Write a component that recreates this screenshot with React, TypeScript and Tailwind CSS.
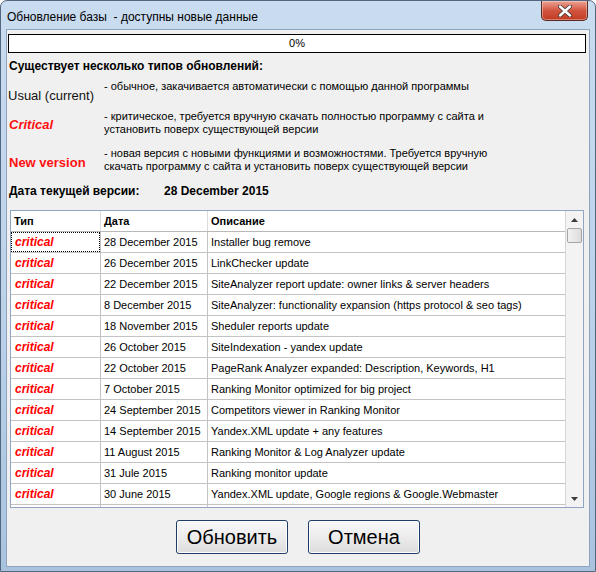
import React from 'react'

type Row = { date: string; desc: string }

const rows: Row[] = [
	{ date: '28 December 2015', desc: 'Installer bug remove' },
	{ date: '26 December 2015', desc: 'LinkChecker update' },
	{ date: '22 December 2015', desc: 'SiteAnalyzer report update: owner links & server headers' },
	{ date: '8 December 2015', desc: 'SiteAnalyzer: functionality expansion (https protocol & seo tags)' },
	{ date: '18 November 2015', desc: 'Sheduler reports update' },
	{ date: '26 October 2015', desc: 'SiteIndexation - yandex update' },
	{ date: '22 October 2015', desc: 'PageRank Analyzer expanded: Description, Keywords, H1' },
	{ date: '7 October 2015', desc: 'Ranking Monitor optimized for big project' },
	{ date: '24 September 2015', desc: 'Competitors viewer in Ranking Monitor' },
	{ date: '14 September 2015', desc: 'Yandex.XML update + any features' },
	{ date: '11 August 2015', desc: 'Ranking Monitor & Log Analyzer update' },
	{ date: '31 Jule 2015', desc: 'Ranking monitor update' },
	{ date: '30 June 2015', desc: 'Yandex.XML update, Google regions & Google.Webmaster' },
]

function CloseButton() {
	return (
		<div className="absolute right-[7px] top-0 flex h-[20px] w-[47px] items-center justify-center rounded-b-[5px] border border-t-0 border-[#5b2a22] bg-gradient-to-b from-[#e9a294] via-[#d2553f] to-[#c23a22] shadow-[inset_0_0_0_1px_rgba(255,255,255,0.35)]">
			<svg width="14" height="12" viewBox="0 0 14 12">
				<path
					d="M2 1.5 L12 10.5 M12 1.5 L2 10.5"
					stroke="#4a3a3a"
					strokeWidth="4.2"
					strokeLinecap="round"
				/>
				<path
					d="M2 1.5 L12 10.5 M12 1.5 L2 10.5"
					stroke="#ffffff"
					strokeWidth="2.4"
					strokeLinecap="round"
				/>
			</svg>
		</div>
	)
}

function Scrollbar() {
	return (
		<div className="flex w-[18px] flex-col border-l border-[#d6d6d6] bg-[#f3f3f3]">
			<div className="flex h-[17px] items-center justify-center">
				<svg width="7" height="4" viewBox="0 0 7 4">
					<path d="M3.5 0 L7 4 L0 4 Z" fill="#3c3c3c" />
				</svg>
			</div>
			<div className="mx-[1px] h-[15px] rounded-[2px] border border-[#a5a5a5] bg-gradient-to-r from-[#f2f2f2] to-[#dcdcdc]" />
			<div className="flex-1" />
			<div className="flex h-[17px] items-center justify-center">
				<svg width="7" height="4" viewBox="0 0 7 4">
					<path d="M0 0 L7 0 L3.5 4 Z" fill="#3c3c3c" />
				</svg>
			</div>
		</div>
	)
}

function UpdatesTable() {
	return (
		<div className="ml-[3px] flex h-[298px] w-[574px] border border-[#8fa5c2] bg-white">
			<div className="flex flex-1 flex-col overflow-hidden">
				<div className="flex h-[21px] shrink-0 border-b border-[#b9b9b9] text-[11px] font-bold leading-[20px] text-black">
					<div className="w-[90px] shrink-0 border-r border-[#dcdcdc] pl-[3px]">Тип</div>
					<div className="w-[107px] shrink-0 border-r border-[#dcdcdc] pl-[3px]">Дата</div>
					<div className="flex-1 pl-[3px]">Описание</div>
				</div>
				{rows.map((row, i) => (
					<div
						className="flex h-[21px] shrink-0 border-b border-[#c3c3c3] text-[11px] leading-[20px]"
						key={row.date + i}
					>
						<div className="relative w-[90px] shrink-0 border-r border-[#c3c3c3] pl-[4px] text-[12px] font-bold italic text-[#ff0000]">
							critical
							{i === 0 && (
								<div className="absolute inset-0 border border-dotted border-black" />
							)}
						</div>
						<div className="w-[107px] shrink-0 border-r border-[#c3c3c3] pl-[3px] text-black">
							{row.date}
						</div>
						<div className="flex-1 whitespace-nowrap pl-[3px] text-black">{row.desc}</div>
					</div>
				))}
				{/* next row, scrolled almost out of view */}
				<div className="flex h-[21px] shrink-0">
					<div className="w-[90px] shrink-0 border-r border-[#c3c3c3]" />
					<div className="w-[107px] shrink-0 border-r border-[#c3c3c3]" />
					<div className="flex-1" />
				</div>
			</div>
			<Scrollbar />
		</div>
	)
}

export default function App() {
	return (
		<div
			className="relative flex h-[572px] w-[596px] flex-col overflow-hidden rounded-t-[7px] border border-[#52677f] bg-gradient-to-b from-[#c9dcf0] via-[#bdd3ea] to-[#a9c3df]"
			style={{ fontFamily: '"Liberation Sans", Arial, sans-serif' }}
		>
			<div className="flex h-[28px] shrink-0 items-center pl-[6px] pt-[3px] text-[12px] text-black">
				Обновление базы&nbsp; - доступны новые данные
			</div>
			<CloseButton />

			<div className="mx-[5px] mb-[4px] flex flex-1 flex-col border border-[#8ea3bf] bg-[#f0f0f0]">
				<div className="ml-[1px] mr-[3px] mt-[4px] flex h-[19px] items-center justify-center border border-black bg-white text-[11px] text-black">
					0%
				</div>

				<div className="ml-[2px] mt-[6px] h-[14px] text-[12px] font-bold leading-[14px] text-black">
					Существует несколько типов обновлений:
				</div>

				<div className="mt-[7px] flex h-[30px] text-black">
					<div className="w-[97px] shrink-0 pl-[1px] pt-[8px] text-[13px] leading-[15px] text-[#111111]">
						Usual (current)
					</div>
					<div className="text-[11px] leading-[13px]">
						- обычное, закачивается автоматически с помощью данной программы
					</div>
				</div>

				<div className="flex h-[37px] text-black">
					<div className="w-[97px] shrink-0 pl-[2px] pt-[7px] text-[13px] font-bold italic leading-[15px] text-[#ff1010]">
						Critical
					</div>
					<div className="text-[11px] leading-[13px]">
						- критическое, требуется вручную скачать полностью программу с сайта и
						<br />
						установить поверх существующей версии
					</div>
				</div>

				<div className="flex h-[37px] text-black">
					<div className="w-[97px] shrink-0 pl-[2px] pt-[8px] text-[13px] font-bold leading-[15px] text-[#ff1010]">
						New version
					</div>
					<div className="text-[11px] leading-[13px]">
						- новая версия с новыми функциями и возможностями. Требуется вручную
						<br />
						скачать программу с сайта и установить поверх существующей версии
					</div>
				</div>

				<div className="ml-[2px] flex h-[14px] text-[12px] font-bold leading-[14px] text-black">
					<div className="w-[155px] shrink-0">Дата текущей версии:</div>
					<div>28 December 2015</div>
				</div>

				<div className="mt-[12px]">
					<UpdatesTable />
				</div>

				<div className="mt-[12px] flex justify-center gap-[20px]">
					<button className="h-[34px] w-[112px] rounded-[3px] border border-[#1d3c68] bg-gradient-to-b from-[#f8f8f8] via-[#ececec] to-[#dcdcdc] text-[20px] text-black shadow-[inset_0_0_0_1px_#ffffff]">
						Обновить
					</button>
					<button className="h-[34px] w-[112px] rounded-[3px] border border-[#1d3c68] bg-gradient-to-b from-[#f8f8f8] via-[#ececec] to-[#dcdcdc] text-[20px] text-black shadow-[inset_0_0_0_1px_#ffffff]">
						Отмена
					</button>
				</div>
			</div>
		</div>
	)
}
